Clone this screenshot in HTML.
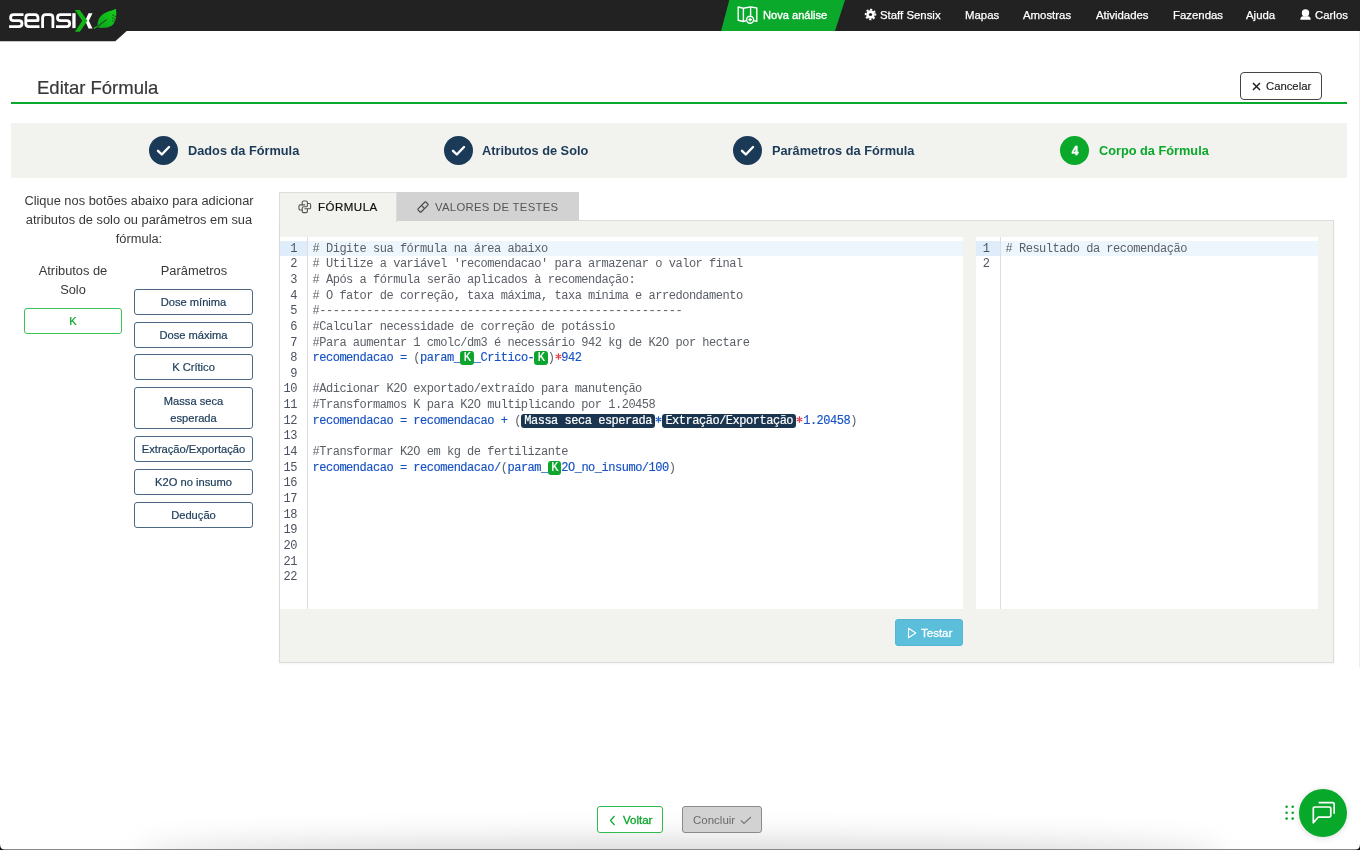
<!DOCTYPE html>
<html><head><meta charset="utf-8">
<style>
*{box-sizing:border-box;margin:0;padding:0}
html,body{width:1360px;height:850px;overflow:hidden;background:#fff;will-change:transform;font-family:"Liberation Sans",sans-serif;position:relative}
.abs{position:absolute}
svg{display:block}
#nav{left:0;top:0;width:1360px;height:31px;background:#222}
.nv{position:absolute;top:8px;color:#fff;font-size:11.4px;line-height:14px;white-space:nowrap;-webkit-text-stroke:0.25px #fff}
#title{left:37px;top:77px;font-size:18.5px;color:#383838;line-height:22px;white-space:nowrap;-webkit-text-stroke:0.2px #383838}
#gline{left:11px;top:102px;width:1336px;height:2px;background:#0aa82b}
#cancel{left:1240px;top:72px;width:82px;height:28px;border:1px solid #444;border-radius:4px}
#cancel span{position:absolute;left:25px;top:6px;font-size:11.3px;line-height:14px;color:#222;-webkit-text-stroke:0.15px #222}
#steps{left:11px;top:123px;width:1336px;height:55px;background:#f2f2ee}
.circ{position:absolute;width:29px;height:29px;border-radius:50%;background:#1b3a58;top:136px}
.stxt{position:absolute;top:143px;font-size:12.75px;font-weight:bold;color:#1b3a58;line-height:15px;white-space:nowrap}
#intro{left:8px;top:191px;width:262px;text-align:center;font-size:12.85px;line-height:19px;color:#383838}
.lbl{position:absolute;text-align:center;font-size:12.85px;line-height:19px;color:#383838;white-space:nowrap}
.pb{position:absolute;left:134px;width:119px;height:26px;border:1px solid #4a6883;border-radius:3px;color:#1b3a58;-webkit-text-stroke:0.2px #1b3a58;font-size:11.15px;text-align:center;line-height:15px;padding-top:5px;white-space:nowrap}
#panel{left:279px;top:220px;width:1055px;height:443px;box-shadow:0 1px 2px rgba(0,0,0,.05);background:#f2f2ee;border:1px solid #dcdcdc}
#tab1{left:279px;top:192px;width:118px;height:30px;background:#f2f2ee;border:1px solid #dcdcdc;border-bottom:none}
#tab2{left:397px;top:192px;width:182px;height:29px;background:#d2d2d2}
.tabt{position:absolute;top:202px;font-size:12px;line-height:14px;white-space:nowrap}
.ed{position:absolute;background:#fff;top:237px;height:372px;overflow:hidden}
.gut{position:absolute;left:0;top:0;bottom:0;border-right:1px solid #dedede}
.code{font-family:"Liberation Mono",monospace;font-size:12px;letter-spacing:-0.48px;line-height:15.64px;white-space:pre;color:#5a5f66}
.hl{position:absolute;left:0;right:0;height:15.2px;background:#eef6fd}
.hlg{position:absolute;left:0;height:15.2px;background:#dfedfa}
.lns{position:absolute;top:4.7px;right:6px;text-align:right;color:#4b5260}
.txt{position:absolute;top:4.7px}
.b{color:#1652c4;-webkit-text-stroke:0.15px #1652c4}
.ast{display:inline-block;width:6.72px;height:10px;position:relative;vertical-align:-1px}
.ast svg{position:absolute;left:0;top:1px}
.hg,.hn{display:inline-block;padding:0 3.36px;border-radius:3px;color:#fff;-webkit-text-stroke:0.2px #fff;line-height:14px;vertical-align:0}
.hg{background:#0ea52e}
.hn{background:#1a354f}
#testar{left:895px;top:619px;width:68px;height:27px;background:#5bbfdc;border-radius:3px;border:1px solid #55b5d3}
#testar span{position:absolute;left:25px;top:6px;color:#fff;font-size:11.5px;line-height:14px;-webkit-text-stroke:0.3px #fff}
#voltar{left:597px;top:806px;width:66px;height:27px;border:1px solid #2fbb4f;border-radius:3px;background:#fff}
#voltar span{position:absolute;left:25px;top:6px;color:#0aa82b;font-size:11.5px;line-height:14px;-webkit-text-stroke:0.3px #0aa82b}
#concluir{left:682px;top:806px;width:80px;height:27px;border:1px solid #8a8a8a;background:#d2d2d2;border-radius:3px}
#concluir span{position:absolute;left:10px;top:6px;color:#6b6b6b;font-size:11.5px;line-height:14px}
#chat{left:1299px;top:789px;width:48px;height:48px;border-radius:50%;background:#08a82a;box-shadow:0 1px 6px rgba(0,0,0,.15)}
#shadow{left:150px;top:856px;width:1060px;height:10px;box-shadow:0 0 34px 12px rgba(0,0,0,.2);border-radius:50%}
#bline{left:0;top:849px;width:1360px;height:1px;background:#888}
</style></head><body>
<!-- NAVBAR -->
<div id="nav" class="abs"></div>
<svg class="abs" style="left:0;top:0" width="130" height="42"><path d="M0 0H130V31H126.7L115.3 41.3H0Z" fill="#222"/></svg>
<svg class="abs" style="left:0;top:0" width="125" height="36" viewBox="0 0 125 36">
 <g fill="none" stroke="#fff" stroke-width="2.8" stroke-linejoin="round">
  <path d="M23.5 14.7H13.6Q10.6 14.7 10.6 17.65Q10.6 20.6 13.6 20.6H19Q22 20.6 22 23.6Q22 26.6 19 26.6H9.1"/>
  <path d="M25.8 20.6H38V17.7Q38 14.7 35 14.7H28.8Q25.8 14.7 25.8 17.7V23.6Q25.8 26.6 28.8 26.6H39.5"/>
  <path d="M42.6 28.1V17.7Q42.6 14.7 45.6 14.7H49.9Q52.9 14.7 52.9 17.7V28.1"/>
  <path d="M71.2 14.7H60.5Q57.5 14.7 57.5 17.65Q57.5 20.6 60.5 20.6H66.7Q69.7 20.6 69.7 23.6Q69.7 26.6 66.7 26.6H56"/>
 </g>
 <rect x="72.3" y="13.2" width="3.3" height="14.9" fill="#fff"/>
 <path d="M88.5 13.3H92.5L88.9 20.8L92.5 28.5H88.5L85.2 20.8Z" fill="#fff"/>
 <path d="M74.9 10H79.8L87.5 20.8L79.8 31.7H74.9L82.2 20.8Z" fill="#12b416"/>
 <defs><linearGradient id="lg" x1="0" y1="1" x2="1" y2="0"><stop offset="0" stop-color="#0ea41c"/><stop offset="1" stop-color="#12d01a"/></linearGradient></defs>
 <path d="M98 27.6C96.5 22 99 15.5 106 12.5C110 10.8 113.5 10.2 115.8 8.8C116.8 14 116.6 20 113 24.5C110.5 27.2 104 28.6 98 27.6Z" fill="url(#lg)"/>
 <path d="M93.8 28.4L99.5 25.3" stroke="#12b01a" stroke-width="1.3"/>
 <path d="M97.5 26.6L106.6 19.6" stroke="#1d2a1d" stroke-width="0.9"/>
 <g fill="#1f3a1f"><rect x="112.6" y="14.6" width="1.2" height="1.2"/><rect x="114.6" y="15.8" width="1.2" height="1.2"/><rect x="112.2" y="17.4" width="1.2" height="1.2"/><rect x="114.2" y="18.6" width="1.2" height="1.2"/><rect x="112.4" y="20.4" width="1.2" height="1.2"/><rect x="114.3" y="21.5" width="1.2" height="1.2"/></g>
</svg>
<div class="abs" style="left:721px;top:0;width:124px;height:31px;background:#0aa82b;clip-path:polygon(8.3px 0,124px 0,114px 31px,0 31px)"></div>
<svg class="abs" style="left:737px;top:6px" width="21" height="18" viewBox="0 0 21 18" fill="none" stroke="#fff" stroke-width="1.4" stroke-linejoin="round">
 <path d="M16 14.6L19.8 15.3V2L13.6 0.9L6.4 2.2L1.2 1V14.2L6.4 15.5L9.5 14.6M6.4 2.2V15.5M13.6 0.9V9.8"/>
 <circle cx="13.1" cy="13.7" r="3.5" fill="#0aa82b"/><path d="M13.1 11.8V15.6M11.2 13.7H15" stroke-width="1.3"/>
</svg>
<div class="nv" style="left:763px;font-size:11.1px;top:7.5px;-webkit-text-stroke:0.35px #fff">Nova análise</div>
<svg class="abs" style="left:864px;top:8px" width="13" height="13" viewBox="0 0 13 13"><circle cx="6.5" cy="6.5" r="4.9" fill="none" stroke="#fff" stroke-width="1.7" stroke-dasharray="2.1 1.75" transform="rotate(-12 6.5 6.5)"/><circle cx="6.5" cy="6.5" r="4.3" fill="#fff"/><circle cx="6.5" cy="6.5" r="1.6" fill="#222"/></svg>
<div class="nv" style="left:880px">Staff Sensix</div>
<div class="nv" style="left:965px">Mapas</div>
<div class="nv" style="left:1023px">Amostras</div>
<div class="nv" style="left:1096px">Atividades</div>
<div class="nv" style="left:1173px">Fazendas</div>
<div class="nv" style="left:1246px">Ajuda</div>
<svg class="abs" style="left:1300px;top:9px" width="12" height="11" viewBox="0 0 12 11"><circle cx="5.5" cy="3.9" r="3.7" fill="#fff"/><path d="M0.3 10.7Q0.3 7.6 3.2 7.3H7.8Q10.7 7.6 10.7 10.7Z" fill="#fff"/></svg>
<div class="nv" style="left:1315px">Carlos</div>

<!-- HEADER -->
<div id="title" class="abs">Editar Fórmula</div>
<div id="gline" class="abs"></div>
<div id="cancel" class="abs"><svg class="abs" style="left:11px;top:9px" width="9" height="9"><path d="M1 1L8 8M8 1L1 8" stroke="#222" stroke-width="1.5"/></svg><span>Cancelar</span></div>

<!-- STEPS -->
<div id="steps" class="abs"></div>
<div class="circ" style="left:149px"></div>
<div class="circ" style="left:444px"></div>
<div class="circ" style="left:733px"></div>
<div class="circ" style="left:1060px;background:#0aa82b"></div>
<svg class="abs" style="left:149px;top:136px" width="29" height="29"><path d="M9 14.8L12.8 18.5L20 11" fill="none" stroke="#fff" stroke-width="2.4" stroke-linecap="round" stroke-linejoin="round"/></svg>
<svg class="abs" style="left:444px;top:136px" width="29" height="29"><path d="M9 14.8L12.8 18.5L20 11" fill="none" stroke="#fff" stroke-width="2.4" stroke-linecap="round" stroke-linejoin="round"/></svg>
<svg class="abs" style="left:733px;top:136px" width="29" height="29"><path d="M9 14.8L12.8 18.5L20 11" fill="none" stroke="#fff" stroke-width="2.4" stroke-linecap="round" stroke-linejoin="round"/></svg>
<div class="abs" style="left:1060.5px;top:144.3px;width:29px;text-align:center;color:#fff;font-weight:bold;font-size:12px;line-height:15px;-webkit-text-stroke:0.4px #fff">4</div>
<div class="stxt" style="left:188px">Dados da Fórmula</div>
<div class="stxt" style="left:482px">Atributos de Solo</div>
<div class="stxt" style="left:772px">Parâmetros da Fórmula</div>
<div class="stxt" style="left:1099px;color:#0aa82b">Corpo da Fórmula</div>

<!-- LEFT -->
<div id="intro" class="abs">Clique nos botões abaixo para adicionar atributos de solo ou parâmetros em sua fórmula:</div>
<div class="lbl" style="left:23px;top:261px;width:100px">Atributos de<br>Solo</div>
<div class="lbl" style="left:134px;top:261px;width:120px">Parâmetros</div>
<div class="pb" style="left:24px;top:308px;width:98px;border-color:#3cc25b;color:#0aa82b;-webkit-text-stroke:0.2px #0aa82b">K</div>
<div class="pb" style="top:289px">Dose mínima</div>
<div class="pb" style="top:322px">Dose máxima</div>
<div class="pb" style="top:354px">K Crítico</div>
<div class="pb" style="top:387px;height:42px;padding-top:5px;line-height:16.5px">Massa seca<br>esperada</div>
<div class="pb" style="top:436px">Extração/Exportação</div>
<div class="pb" style="top:469px">K2O no insumo</div>
<div class="pb" style="top:502px">Dedução</div>

<!-- TABS / PANEL -->
<div id="panel" class="abs"></div>
<div id="tab1" class="abs"></div>
<div id="tab2" class="abs"></div>
<svg class="abs" style="left:296.7px;top:199px" width="15.6" height="15.6" viewBox="0 0 24 24" fill="none" stroke="#555" stroke-width="1.7" stroke-linecap="round" stroke-linejoin="round"><path d="M12 9h-7a2 2 0 0 0 -2 2v4a2 2 0 0 0 2 2h3"/><path d="M12 15h7a2 2 0 0 0 2 -2v-4a2 2 0 0 0 -2 -2h-3"/><path d="M8 9v-4a2 2 0 0 1 2 -2h4a2 2 0 0 1 2 2v5a2 2 0 0 1 -2 2h-4a2 2 0 0 0 -2 2v5a2 2 0 0 0 2 2h4a2 2 0 0 0 2 -2v-4"/></svg>
<div class="tabt" style="left:318px;top:200px;color:#111;font-size:11.5px;letter-spacing:0.5px;-webkit-text-stroke:0.2px #111">FÓRMULA</div>
<svg class="abs" style="left:417px;top:201px" width="12" height="12" viewBox="0 0 12 12" fill="none" stroke="#444" stroke-width="1.1"><g transform="translate(6 6) rotate(-45)"><rect x="-5.6" y="-2.2" width="11.2" height="4.4" rx="1.1"/><path d="M0 -2.2V2.2"/></g></svg>
<div class="tabt" style="left:435px;top:200px;color:#555;font-size:11.3px;letter-spacing:0.3px">VALORES DE TESTES</div>

<!-- LEFT EDITOR -->
<div class="ed code" style="left:280px;width:683px">
 <div class="hl" style="top:3.5px"></div>
 <div class="hlg" style="top:3.5px;width:27px"></div>
 <div class="gut" style="width:28px"></div>
 <div class="lns" style="right:auto;left:0;width:17px">1
2
3
4
5
6
7
8
9
10
11
12
13
14
15
16
17
18
19
20
21
22</div>
 <div class="txt" style="left:32.5px"># Digite sua fórmula na área abaixo
# Utilize a variável 'recomendacao' para armazenar o valor final
# Após a fórmula serão aplicados à recomendação:
# O fator de correção, taxa máxima, taxa mínima e arredondamento
#------------------------------------------------------
#Calcular necessidade de correção de potássio
#Para aumentar 1 cmolc/dm3 é necessário 942 kg de K2O por hectare
<span class="b">recomendacao = </span>(<span class="b">param_<span class="hg">K</span>_Critico-<span class="hg">K</span></span>)<span class="ast"><svg width="7" height="7" viewBox="0 0 7 7" stroke="#e33a4a" stroke-width="1.2"><path d="M3.5 0.3V6.7M0.7 1.9L6.3 5.1M0.7 5.1L6.3 1.9"/></svg></span><span class="b">942</span>

#Adicionar K2O exportado/extraído para manutenção
#Transformamos K para K2O multiplicando por 1.20458
<span class="b">recomendacao = recomendacao + </span>(<span class="hn">Massa seca esperada</span><span class="ast"><svg width="7" height="7" viewBox="0 0 7 7" stroke="#1d58bd" stroke-width="1.2"><path d="M3.5 0.3V6.7M0.7 1.9L6.3 5.1M0.7 5.1L6.3 1.9"/></svg></span><span class="hn">Extração/Exportação</span><span class="ast"><svg width="7" height="7" viewBox="0 0 7 7" stroke="#e33a4a" stroke-width="1.2"><path d="M3.5 0.3V6.7M0.7 1.9L6.3 5.1M0.7 5.1L6.3 1.9"/></svg></span><span class="b">1.20458</span>)

#Transformar K2O em kg de fertilizante
<span class="b">recomendacao = recomendacao/</span>(<span class="b">param_<span class="hg">K</span>2O_no_insumo/100</span>)</div>
</div>

<!-- RIGHT EDITOR -->
<div class="ed code" style="left:976px;width:342px">
 <div class="hl" style="top:3.5px"></div>
 <div class="hlg" style="top:3.5px;width:24px"></div>
 <div class="gut" style="width:25px"></div>
 <div class="lns" style="right:auto;left:0;width:13.5px">1
2</div>
 <div class="txt" style="left:29.5px"># Resultado da recomendação</div>
</div>

<div id="testar" class="abs"><svg class="abs" style="left:11px;top:7px" width="10" height="12"><path d="M1.5 1.2L8.8 6L1.5 10.8Z" fill="none" stroke="#fff" stroke-width="1.1" stroke-linejoin="round"/></svg><span>Testar</span></div>

<!-- FOOTER -->
<div id="shadow" class="abs"></div>
<div id="bline" class="abs"></div>
<div class="abs" style="left:1359px;top:31px;width:1px;height:636px;background:#eeeeee"></div>
<svg class="abs" style="left:0;top:844px" width="6" height="6"><path d="M0 0Q0 6 6 6H0Z" fill="#111"/></svg>
<svg class="abs" style="left:1354px;top:844px" width="6" height="6"><path d="M6 0Q6 6 0 6H6Z" fill="#111"/></svg>
<div id="voltar" class="abs"><svg class="abs" style="left:11px;top:8px" width="7" height="11"><path d="M5.5 1L1.5 5.5L5.5 10" fill="none" stroke="#0aa82b" stroke-width="1.2"/></svg><span>Voltar</span></div>
<div id="concluir" class="abs"><span>Concluir</span><svg class="abs" style="left:57px;top:9px" width="12" height="9"><path d="M1 4.5L4 7.5L11 1" fill="none" stroke="#777" stroke-width="1.1"/></svg></div>
<svg class="abs" style="left:1285px;top:805px" width="10" height="16"><g fill="#0aa82b"><circle cx="1.6" cy="1.8" r="1.3"/><circle cx="7.7" cy="1.8" r="1.3"/><circle cx="1.6" cy="7.7" r="1.3"/><circle cx="7.7" cy="7.7" r="1.3"/><circle cx="1.6" cy="13.6" r="1.3"/><circle cx="7.7" cy="13.6" r="1.3"/></g></svg>
<div id="chat" class="abs"><svg class="abs" style="left:12px;top:12px" width="24" height="24" viewBox="0 0 24 24" fill="none" stroke="#fff" stroke-width="1.7" stroke-linejoin="round"><path d="M7.6 1.6H21.6Q23.2 1.6 23.2 3.2V12.8"/><path d="M2.3 21.8V7.6Q2.3 6 3.9 6H18.2Q19.8 6 19.8 7.6V14.6Q19.8 16.2 18.2 16.2H7.2Z"/></svg></div>
</body></html>
